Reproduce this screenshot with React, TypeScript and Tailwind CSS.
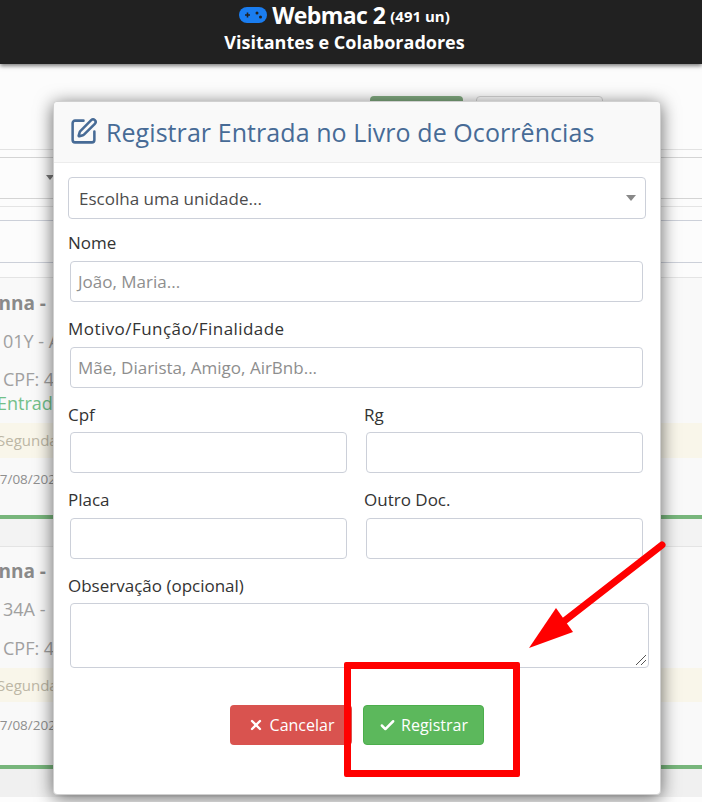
import { Check, X, SquarePen } from "lucide-react";

const inputCls = "block w-full h-[41px] border border-[#ccd0d9] rounded-[4px] bg-white px-[7px] text-[17px] text-[#8e8e8e] leading-[39px] whitespace-nowrap";

function Field({ label, placeholder, wide, low }: { label: string; placeholder?: string; wide?: boolean; low?: boolean }) {
  return (
    <div className="flex-1 min-w-0">
      <div className={(low ? "h-[30px] pt-[1px] " : "h-[30px] ") + (wide ? "leading-[24px] text-[17px] text-[#333] tracking-[0.45px] whitespace-nowrap" : "leading-[24px] text-[17px] text-[#333] whitespace-nowrap")}>{label}</div>
      <div className="pl-[2px] pr-[3px]">
        <div className={inputCls}>{placeholder}</div>
      </div>
    </div>
  );
}

function BgCard({ code, entrada }: { code: string; entrada?: boolean }) {
  return (
    <div className="text-[#a0a0a0] overflow-hidden whitespace-nowrap">
      <div className="ml-[-13px] text-[19px] font-bold text-[#8a8a8a] leading-[24px]">anna - </div>
      <div className="mt-[14px] pl-[3px] text-[18px] leading-[24px]">{code}</div>
      <div className={entrada ? "mt-[14px] pl-[3px] text-[18px] leading-[24px]" : "mt-[15px] pl-[3px] text-[18px] leading-[24px]"}>CPF: 4</div>
      {entrada && <div className="ml-[-3px] text-[18px] leading-[24px] text-[#72c08a]">Entrada</div>}
      <div className={entrada ? "mt-[8px] h-[35px] bg-[#f9f6ea] pl-0 text-[15px] leading-[34px] text-[#bdb7a5]" : "mt-[8px] h-[34px] bg-[#f9f6ea] text-[15px] leading-[34px] text-[#bdb7a5]"}>
        <span className="ml-[-3px]">Segunda</span>
      </div>
      <div className={entrada ? "mt-[9px] ml-[-8px] text-[13.5px] leading-[24px] text-[#8f8f8f]" : "mt-[11px] ml-[-8px] text-[13.5px] leading-[24px] text-[#8f8f8f]"}>17/08/2021</div>
      <div className={entrada ? "h-[4px] bg-[#78b67c] mt-[24px]" : "h-[4px] bg-[#78b67c] mt-[28px]"} />
    </div>
  );
}

export default function App() {
  return (
    <div className="relative w-[702px] h-[802px] overflow-hidden bg-[#fdfdfd] font-['Open_Sans',sans-serif]">
      <header className="relative z-10 h-[64px] pr-[13px] bg-[#212121] text-white text-center shadow-[0_2px_4px_rgba(0,0,0,0.5)]">
        <div className="flex items-center justify-center h-[30px]">
          <svg width="28" height="16" viewBox="0 0 28 16" className="mr-[5px]">
            <rect x="0" y="0" width="28" height="16" rx="8" fill="#1a7df0" />
            <path d="M6 8h5M8.5 5.5v5" stroke="#212121" strokeWidth="1.6" />
            <circle cx="18" cy="6" r="1.5" fill="#212121" />
            <circle cx="21.5" cy="10" r="1.5" fill="#212121" />
          </svg>
          <span className="text-[23px] tracking-[-0.6px] font-bold leading-[30px]">Webmac 2</span>
          <span className="text-[15px] font-bold ml-[5px] leading-[30px] pt-[2px]">(491 un)</span>
        </div>
        <div className="text-[18px] font-bold leading-[24px]">Visitantes e Colaboradores</div>
      </header>

      <div className="bg-[#fcfcfc]">
        <div className="h-[86px] flex pt-[32px] pl-[370px] gap-[13px] border-b border-[#e2e2e2]">
          <div className="w-[93px] h-[20px] rounded-[4px] bg-[#80a97f]" />
          <div className="w-[127px] h-[20px] rounded-[4px] border border-[#d4d4d4]" />
        </div>
        <div className="h-[8px] border-b border-[#d4d4d4]" />
        <div className="relative h-[41px] border-b border-[#d4d4d4]">
          <span className="absolute left-[46px] top-[17px] w-0 h-0 border-l-[4px] border-r-[4px] border-t-[5px] border-l-transparent border-r-transparent border-t-[#777]" />
        </div>
        <div className="h-[8px] border-b border-[#e4e4e4]" />
        <div className="h-[14px] border-b border-[#ccd0d9]" />
        <div className="h-[42px] border-b border-[#ccd0d9]" />
        <div className="h-[15px] border-b border-[#e4e4e4]" />
        <div className="pt-[13px] bg-[#f9f9f9]">
          <BgCard code="01Y - A" entrada />
        </div>
        <div className="h-[28px] bg-[#f3f3f3] border-b border-[#e4e4e4]" />
        <div className="pt-[12px] bg-[#f9f9f9]">
          <BgCard code="34A - " />
        </div>
        <div className="h-[28px] bg-[#f0f0f0]" />
      </div>

      <div className="absolute left-[53px] top-[101px] w-[608px] h-[694px] bg-white rounded-[4px] border border-[#d0d0d0] shadow-[0_3px_18px_rgba(0,0,0,0.6)]">
        <div className="h-[61px] bg-[#f9f9f9] border-b border-[#ececec] rounded-t-[4px] flex items-center pl-[15px] pb-[1px] text-[#476b96]">
          <SquarePen size={29} strokeWidth={2.1} />
          <span className="ml-[8px] text-[25px] tracking-[0.07px] leading-[32px] whitespace-nowrap">Registrar Entrada no Livro de Ocorrências</span>
        </div>
        <div className="px-[14px] pt-[14px]">
          <div className="relative h-[42px] border border-[#ccd0d9] rounded-[4px] bg-white pl-[10px] text-[17px] leading-[41px] text-[#4c4c4c]">
            Escolha uma unidade...
            <span className="absolute right-[9px] top-[17px] w-0 h-0 border-l-[5px] border-r-[5px] border-t-[6px] border-l-transparent border-r-transparent border-t-[#888]" />
          </div>
          <div className="mt-[12px]"><Field label="Nome" placeholder="João, Maria..." /></div>
          <div className="mt-[15px]"><Field wide label="Motivo/Função/Finalidade" placeholder="Mãe, Diarista, Amigo, AirBnb..." /></div>
          <div className="flex gap-[14px] mt-[14px]">
            <Field low label="Cpf" />
            <Field low label="Rg" />
          </div>
          <div className="flex gap-[14px] mt-[15px]">
            <Field label="Placa" />
            <Field label="Outro Doc." />
          </div>
          <div className="mt-[14px]">
            <div className="h-[30px] pt-[1px] leading-[24px] text-[17px] text-[#333]">Observação (opcional)</div>
            <div className="relative ml-[2px] mr-[-3px] h-[65px] border border-[#ccd0d9] rounded-[4px]">
              <svg width="12" height="12" viewBox="0 0 12 12" className="absolute right-[1px] bottom-[1px]">
                <path d="M1 11L11 1M6 11L11 6" stroke="#555" strokeWidth="1" />
              </svg>
            </div>
          </div>
          <div className="flex justify-center gap-[11px] mt-[37px]">
            <div className="flex items-center justify-center w-[122px] h-[40px] rounded-[4px] bg-[#d9534f] text-white text-[16px]">
              <X size={16} strokeWidth={3.5} className="mr-[6px]" />Cancelar
            </div>
            <div className="flex items-center justify-center w-[121px] h-[40px] rounded-[4px] bg-[#5cb85c] border border-[#4cae4c] text-white text-[16px]">
              <Check size={17} strokeWidth={3.5} className="mr-[5px]" />Registrar
            </div>
          </div>
        </div>
      </div>

      <div className="absolute left-[344px] top-[662px] w-[176px] h-[115px] border-[7px] border-[#ff0000] rounded-[2px]" />
      <svg width="150" height="130" viewBox="0 0 150 130" className="absolute left-[525px] top-[535px]">
        <path d="M137 10L38 87" stroke="#ff0000" strokeWidth="7" strokeLinecap="round" />
        <path d="M4 113L31 73L48 97Z" fill="#ff0000" />
      </svg>
    </div>
  );
}
